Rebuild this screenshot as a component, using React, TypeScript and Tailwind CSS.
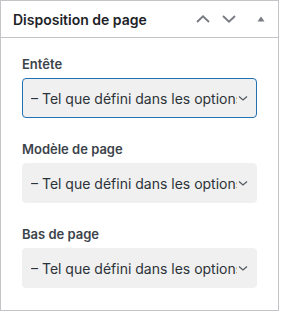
const fields = [
  { label: "Entête", focused: true },
  { label: "Modèle de page", focused: false },
  { label: "Bas de page", focused: false },
]

function FakeSelect({ focused }: { focused: boolean }) {
  return (
    <div
      className={`flex h-[40px] items-center rounded-[4px] border bg-[#f0f0f0] pl-[8px] pr-[8px] ${
        focused ? "border-[#2271b1]" : "border-[#f0f0f0]"
      }`}
    >
      <span className="flex-1 overflow-hidden whitespace-nowrap text-[14px] text-[#2c3338]">
        – Tel que défini dans les options
      </span>
      <svg width="10" height="10" viewBox="0 0 10 10" className="ml-[1px] shrink-0">
        <path d="M1 3.5 L5 7 L9 3.5" fill="none" stroke="#50575e" strokeWidth="1.2" />
      </svg>
    </div>
  )
}

export default function App() {
  return (
    <div className="h-[312px] w-[281px] bg-white" style={{ fontFamily: "Inter, 'Liberation Sans', sans-serif" }}>
      <div className="h-[311px] w-[279px] border border-[#c3c4c7] bg-white">
        {/* Header */}
        <div className="flex h-[37px] items-center border-b border-[#c3c4c7] pl-[12px] pr-[13px]">
          <h2 className="flex-1 text-[14px] font-semibold text-[#1d2327]">Disposition de page</h2>
          <div className="flex items-center">
            <svg width="14" height="8" viewBox="0 0 14 8">
              <path d="M1 7 L7 1.3 L13 7" fill="none" stroke="#787c82" strokeWidth="1.9" />
            </svg>
            <svg width="14" height="8" viewBox="0 0 14 8" className="ml-[12px]">
              <path d="M1 1 L7 6.7 L13 1" fill="none" stroke="#787c82" strokeWidth="1.9" />
            </svg>
            <svg width="8" height="6" viewBox="0 0 8 6" className="ml-[21px]">
              <path d="M4 0.5 L7.5 5.5 L0.5 5.5 Z" fill="#787c82" />
            </svg>
          </div>
        </div>

        {/* Body */}
        <div className="px-[21px] pt-[17px]">
          {fields.map((f, i) => (
            <div key={f.label} className={i > 0 ? "mt-[22px]" : ""}>
              <div className="mb-[5px] h-[18px] text-[13px] font-semibold leading-[18px] text-[#3c434a]">{f.label}</div>
              <FakeSelect focused={f.focused} />
            </div>
          ))}
        </div>
      </div>
    </div>
  )
}
